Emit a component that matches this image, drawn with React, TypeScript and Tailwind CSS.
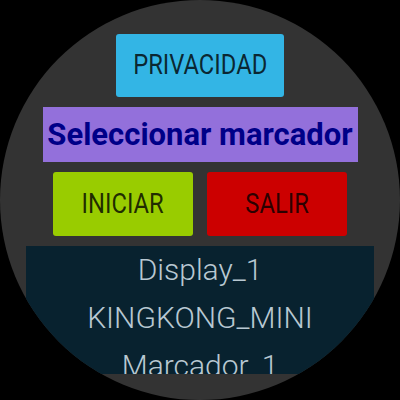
const rows = ["Display_1", "KINGKONG_MINI", "Marcador_1"];

const Btn = ({ label, className }: { label: string; className: string }) => (
  <div className={`flex items-center justify-center rounded-[3px] ${className}`}>
    <span className="inline-block scale-x-[0.88] text-[27px] leading-none text-black/80">
      {label}
    </span>
  </div>
);

export default function App() {
  return (
    <div className="h-[400px] w-[400px] bg-black font-['Roboto',sans-serif]">
      <div className="flex h-[400px] w-[400px] flex-col items-center gap-[10px] overflow-hidden rounded-full bg-[#333333] pt-[34px]">
        <Btn label="PRIVACIDAD" className="h-[63px] w-[168px] bg-[#33b5e5]" />
        <div className="flex h-[55px] w-[315px] items-center justify-center bg-[#9370db]">
          <span className="whitespace-nowrap text-[31px] font-bold leading-none text-[#000088]">
            Seleccionar marcador
          </span>
        </div>
        <div className="flex gap-[14px]">
          <Btn label="INICIAR" className="h-[64px] w-[140px] bg-[#99cc00]" />
          <Btn label="SALIR" className="h-[64px] w-[140px] bg-[#cc0000]" />
        </div>
        <div className="flex h-[128px] w-[348px] flex-col items-center overflow-hidden bg-[#08222f]">
          {rows.map((r) => (
            <div key={r} className="flex h-[48px] shrink-0 items-center justify-center">
              <span className="whitespace-nowrap text-[30px] font-light leading-none text-[#b8c8d2]">
                {r}
              </span>
            </div>
          ))}
        </div>
      </div>
    </div>
  );
}
